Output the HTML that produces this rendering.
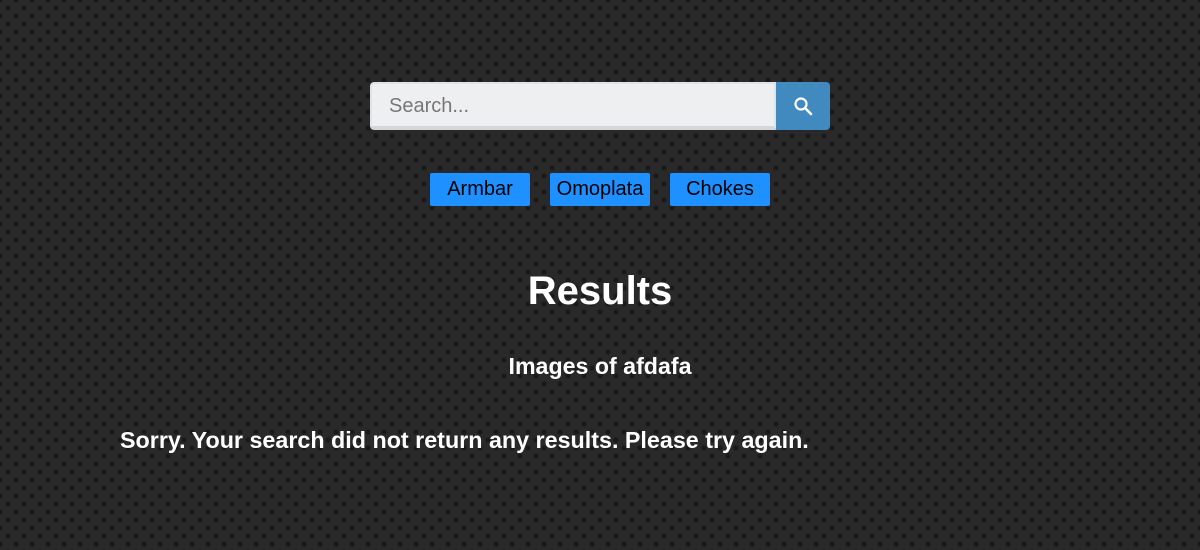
<!DOCTYPE html>
<html><head><style>
html,body{margin:0;width:1200px;height:550px;overflow:hidden}
body{background-color:#292929;background-image:radial-gradient(circle,#1a1a1a 2.2px,transparent 3px),radial-gradient(circle,#1a1a1a 2.2px,transparent 3px);background-size:16px 16px;background-position:0 0,8px 8px;font-family:"Liberation Sans",Arial,sans-serif;color:#fff;position:relative}
.search{position:absolute;left:370px;top:82px;width:460px;height:48px;border-radius:4px;overflow:hidden;display:flex}
.inp{flex:1;background:#eeeff1;border:2px solid #e2e3e6;border-bottom:4px solid #d5d6da;border-radius:4px 0 0 4px;box-sizing:border-box;padding-left:17px;font-size:20px;color:#777;line-height:44px}
.btn{width:54px;background:#418ac0;display:flex;align-items:center;justify-content:center}
.tag{position:absolute;top:173px;width:100px;height:33px;background:#1e90ff;border-radius:2px;color:#000;font-size:20px;text-align:center;line-height:33px}
h1{position:absolute;top:268px;left:0;width:1200px;margin:0;text-align:center;font-size:40px;line-height:46px}
h3{position:absolute;top:353px;left:0;width:1200px;margin:0;text-align:center;font-size:23.2px;line-height:26px}
p{position:absolute;top:427px;left:120px;margin:0;font-size:23.3px;font-weight:bold;line-height:26px}
</style></head><body>
<div class="search"><div class="inp">Search...</div><div class="btn"><svg width="20" height="20" viewBox="0 0 20 20"><circle cx="8" cy="8" r="5.5" fill="none" stroke="#fff" stroke-width="2.2"/><path d="M12 12L18 18" stroke="#fff" stroke-width="2.6" stroke-linecap="round"/></svg></div></div>
<div class="tag" style="left:430px">Armbar</div>
<div class="tag" style="left:550px">Omoplata</div>
<div class="tag" style="left:670px">Chokes</div>
<h1>Results</h1>
<h3>Images of afdafa</h3>
<p>Sorry. Your search did not return any results. Please try again.</p>
</body></html>
